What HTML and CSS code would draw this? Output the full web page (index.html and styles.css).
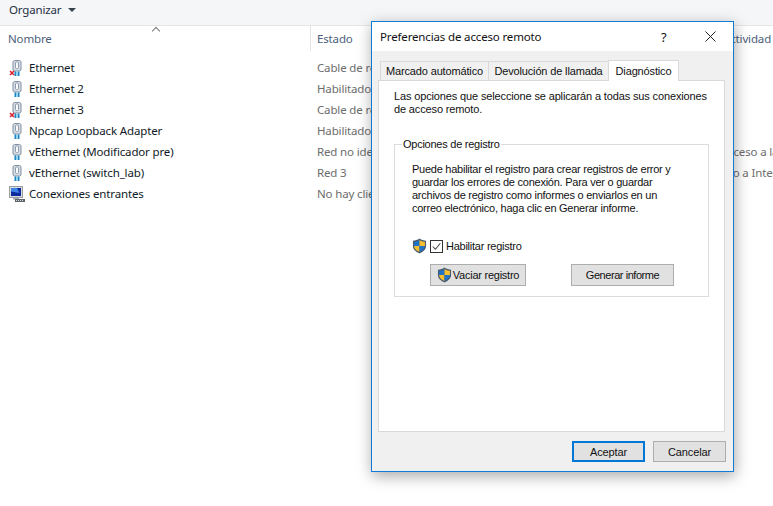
FILE: index.html
```html
<!DOCTYPE html>
<html lang="es">
<head>
<meta charset="utf-8">
<title>Conexiones de red</title>
<link rel="stylesheet" href="styles.css">
</head>
<body>
<svg class="defs" width="0" height="0" aria-hidden="true">
  <defs>
    <symbol id="nic" viewBox="0 0 16 16">
      <path d="M5.500 .5h5l1.500 1v8.500l-1.500 1h-5l-1.500-1V1.500z" fill="#d6dce4" stroke="#8390a3" stroke-width="1"/>
      <rect x="6.500" y="2" width="3" height="6.500" rx="1" fill="#f8fafc" stroke="#8f9cae" stroke-width="1"/>
      <rect x="5.500" y="11.500" width="1.500" height="4.500" fill="#1f86c6"/>
      <rect x="7" y="11.500" width="2" height="4.500" fill="#93d3f0"/>
      <rect x="9" y="11.500" width="1.500" height="4.500" fill="#1f86c6"/>
    </symbol>
    <symbol id="shield" viewBox="0 0 16 16">
      <path d="M8 0C6 1.500 3.500 2.300 1 2.400V8c0 3.700 3.300 6.300 7 8 3.700-1.700 7-4.300 7-8V2.400C12.500 2.300 10 1.500 8 0z" fill="#4a5a6c"/>
      <path d="M8 1.500V8H2.200V3.500C4.500 3.300 6.400 2.600 8 1.500z" fill="#1f74c8"/>
      <path d="M8 1.500c1.600 1.100 3.500 1.800 5.800 2V8H8z" fill="#f7c02e"/>
      <path d="M2.200 8H8v6.500C5 13.200 2.400 11 2.200 8z" fill="#f7c02e"/>
      <path d="M8 8h5.800c-.2 3-2.800 5.200-5.800 6.500z" fill="#1f74c8"/>
    </symbol>
  </defs>
</svg>

<main class="explorer">
  <div class="toolbar">
    <span class="organize">Organizar</span>
    <span class="caret"></span>
  </div>
  <div class="columns">
    <div class="col col-name">Nombre<span class="sort"></span></div>
    <div class="col col-state">Estado</div>
    <div class="col col-activity">Conectividad</div>
  </div>
  <ul class="list">
    <li class="row"><span class="ico"><svg class="nic"><use href="#nic"/></svg><svg class="x" viewBox="0 0 6 6" aria-hidden="true"><path d="M1 1l4 4M5 1l-4 4" stroke="#d8202a" stroke-width="1.500" fill="none"/></svg></span><span class="name">Ethernet</span><span class="state">Cable de red desconectado</span></li>
    <li class="row"><span class="ico"><svg class="nic"><use href="#nic"/></svg></span><span class="name">Ethernet 2</span><span class="state">Habilitado</span></li>
    <li class="row"><span class="ico"><svg class="nic"><use href="#nic"/></svg><svg class="x" viewBox="0 0 6 6" aria-hidden="true"><path d="M1 1l4 4M5 1l-4 4" stroke="#d8202a" stroke-width="1.500" fill="none"/></svg></span><span class="name">Ethernet 3</span><span class="state">Cable de red desconectado</span></li>
    <li class="row"><span class="ico"><svg class="nic"><use href="#nic"/></svg></span><span class="name">Npcap Loopback Adapter</span><span class="state">Habilitado</span></li>
    <li class="row"><span class="ico"><svg class="nic"><use href="#nic"/></svg></span><span class="name">vEthernet (Modificador pre)</span><span class="state">Red no identificada</span><span class="extra">Sin acceso a la red</span></li>
    <li class="row"><span class="ico"><svg class="nic"><use href="#nic"/></svg></span><span class="name">vEthernet (switch_lab)</span><span class="state">Red 3</span><span class="extra">Acceso a Internet</span></li>
    <li class="row"><span class="ico">
      <svg class="pc" viewBox="0 0 16 16" aria-hidden="true">
        <rect x=".5" y=".5" width="13" height="11" fill="#d8dbdf" stroke="#9a9fa6"/>
        <rect x="2" y="2" width="10" height="8" fill="#0a2a9e"/>
        <path d="M2 2h6l2.500 5L2 5.500z" fill="#3f82e6"/>
        <rect x="4" y="12" width="6" height="1.500" fill="#a4a9af"/>
        <rect x="6" y="13" width="10" height="3" fill="#5e656c"/>
        <path d="M7 14.500h8" stroke="#d5dade" stroke-dasharray="1 1"/>
      </svg></span><span class="name">Conexiones entrantes</span><span class="state">No hay clientes conectados</span></li>
  </ul>
</main>

<section class="dialog">
  <header class="titlebar">
    <h1 class="title">Preferencias de acceso remoto</h1>
    <span class="help">?</span>
    <svg class="close" viewBox="0 0 12 12" aria-hidden="true"><path d="M.5 .5l11 11M11.500 .5l-11 11" stroke="#111" fill="none"/></svg>
  </header>
  <div class="body">
    <div class="tabs">
      <span class="tab tab-auto">Marcado automático</span>
      <span class="tab tab-call">Devolución de llamada</span>
      <span class="tab tab-on">Diagnóstico</span>
    </div>
    <div class="panel">
      <p class="intro">Las opciones que seleccione se aplicarán a todas sus conexiones de acceso remoto.</p>
      <fieldset class="group">
        <legend class="legend">Opciones de registro</legend>
        <p class="desc">Puede habilitar el registro para crear registros de error y guardar los errores de conexión. Para ver o guardar archivos de registro como informes o enviarlos en un correo electrónico, haga clic en Generar informe.</p>
        <div class="check-row">
          <svg class="shield"><use href="#shield"/></svg>
          <span class="check"><svg viewBox="0 0 13 13" aria-hidden="true"><path d="M2 6.500l3.200 3.200 5.800-7" stroke="#444" stroke-width="1.200" fill="none"/></svg></span>
          <span>Habilitar registro</span>
        </div>
        <div class="actions">
          <button class="btn btn-clear" type="button"><svg class="shield"><use href="#shield"/></svg>Vaciar registro</button>
          <button class="btn btn-report" type="button">Generar informe</button>
        </div>
      </fieldset>
    </div>
    <footer class="footer">
      <button class="btn btn-ok" type="button">Aceptar</button>
      <button class="btn btn-cancel" type="button">Cancelar</button>
    </footer>
  </div>
</section>
</body>
</html>
```

FILE: styles.css
```css
* { box-sizing: border-box; }
html, body { margin: 0; height: 100%; }
body {
  width: 773px;
  height: 506px;
  overflow: hidden;
  background: #fff;
  position: relative;
  font-family: "Noto Sans", "Open Sans", sans-serif;
  font-size: 11.500px;
  letter-spacing: -.15px;
  color: #111;
}
.defs { position: absolute; }

.toolbar {
  height: 26px;
  background: #f5f6f7;
  border-bottom: 1px solid #e3e5e7;
  display: flex;
  align-items: flex-start;
  padding: 2px 0 0 9px;
  gap: 7px;
  color: #1e3044;
}
.caret {
  width: 0;
  height: 0;
  margin-top: 6px;
  border: 4px solid transparent;
  border-top: 4px solid #34404e;
  border-bottom: 0;
}
.columns {
  display: flex;
  height: 25px;
  color: #4c607a;
}
.col { display: flex; align-items: center; position: relative; flex: none; }
.col-name { width: 311px; padding-left: 8px; border-right: 1px solid #e5e5e5; }
.col-state { width: 392px; padding-left: 6px; }
.col-activity { width: 70px; overflow: hidden; white-space: nowrap; }
.sort {
  position: absolute;
  left: 153px;
  top: 2px;
  width: 6px;
  height: 6px;
  border-left: 1px solid #777;
  border-top: 1px solid #777;
  transform: rotate(45deg);
}
.list {
  list-style: none;
  margin: 6px 0 0;
  padding: 0;
}
.row {
  height: 21px;
  display: flex;
  align-items: center;
}
.ico {
  width: 29px;
  height: 16px;
  padding-left: 9px;
  position: relative;
  flex: none;
}
.nic, .pc { display: block; width: 16px; height: 16px; }
.x {
  position: absolute;
  left: 9px;
  top: 10px;
  width: 6px;
  height: 6px;
  display: block;
}
.name { width: 288px; flex: none; color: #101a26; }
.state { width: 386px; flex: none; color: #6d6d6d; white-space: nowrap; overflow: hidden; }
.extra { width: 70px; flex: none; color: #6d6d6d; white-space: nowrap; overflow: hidden; }

.dialog {
  position: absolute;
  left: 371px;
  top: 21px;
  width: 363px;
  height: 451px;
  background: #f0f0f0;
  border: 1px solid #0f7bd6;
  box-shadow: 1px 4px 14px rgba(0, 0, 0, .35);
  display: flex;
  flex-direction: column;
  font-family: "Liberation Sans", Arial, sans-serif;
  font-size: 11px;
  letter-spacing: 0;
  color: #111;
}
.titlebar {
  height: 29px;
  flex: none;
  background: #fff;
  display: flex;
  align-items: center;
  padding-left: 8px;
  font-family: "Noto Sans", sans-serif;
  font-size: 11.500px;
  letter-spacing: -.15px;
}
.title { margin: 0; font-size: inherit; font-weight: 400; width: 281px; }
.help { font-size: 13px; width: 44px; }
.close { width: 11px; height: 11px; }
.body { flex: 1; display: flex; flex-direction: column; padding: 8px 7px 9px 6px; }
.tabs { display: flex; height: 21px; padding-left: 2px; align-items: flex-end; }
.tab {
  height: 19px;
  background: #f0f0f0;
  border: 1px solid #d9d9d9;
  border-bottom: 0;
  margin-right: -1px;
  display: flex;
  align-items: center;
  justify-content: center;
  white-space: nowrap;
  letter-spacing: -.15px;
}
.tab-auto { width: 109px; }
.tab-call { width: 121px; }
.tab-on {
  width: 71px;
  height: 21px;
  background: #fff;
  position: relative;
  z-index: 1;
  margin-bottom: -1px;
}
.panel {
  flex: 1;
  background: #fff;
  border: 1px solid #d9d9d9;
  margin-right: 1px;
  padding: 9px 15px 0;
}
.intro { margin: 0 0 22px; line-height: 13px; width: 320px; letter-spacing: -.14px; }
.group {
  margin: 0;
  padding: 12px 17px 0;
  border: 1px solid #dcdcdc;
  height: 159px;
  letter-spacing: -.25px;
}
.legend { padding: 0 1px; margin-left: -10px; line-height: 13px; }
.desc { margin: 0; line-height: 13px; width: 272px; }
.check-row { display: flex; align-items: center; gap: 2px; margin-top: 22px; height: 18px; }
.shield { width: 15px; height: 16px; flex: none; }
.check {
  width: 13px;
  height: 13px;
  margin-left: 1px;
  border: 1px solid #333;
  background: #fff;
  display: block;
  margin-right: 1px;
}
.check svg { display: block; width: 11px; height: 11px; }
.actions { display: flex; margin-top: 9px; padding-left: 18px; gap: 45px; }
.btn {
  font: inherit;
  letter-spacing: -.25px;
  color: #111;
  height: 22px;
  background: #e1e1e1;
  border: 1px solid #adadad;
  padding: 0;
  display: flex;
  align-items: center;
  justify-content: center;
}
.btn-clear { width: 96px; gap: 1px; }
.btn-report { width: 103px; letter-spacing: -.45px; }
.footer { display: flex; justify-content: flex-end; gap: 8px; margin-top: 9px; }
.btn-ok, .btn-cancel { width: 73px; height: 21px; letter-spacing: -.1px; }
.btn-ok { border: 2px solid #0078d7; }
```
